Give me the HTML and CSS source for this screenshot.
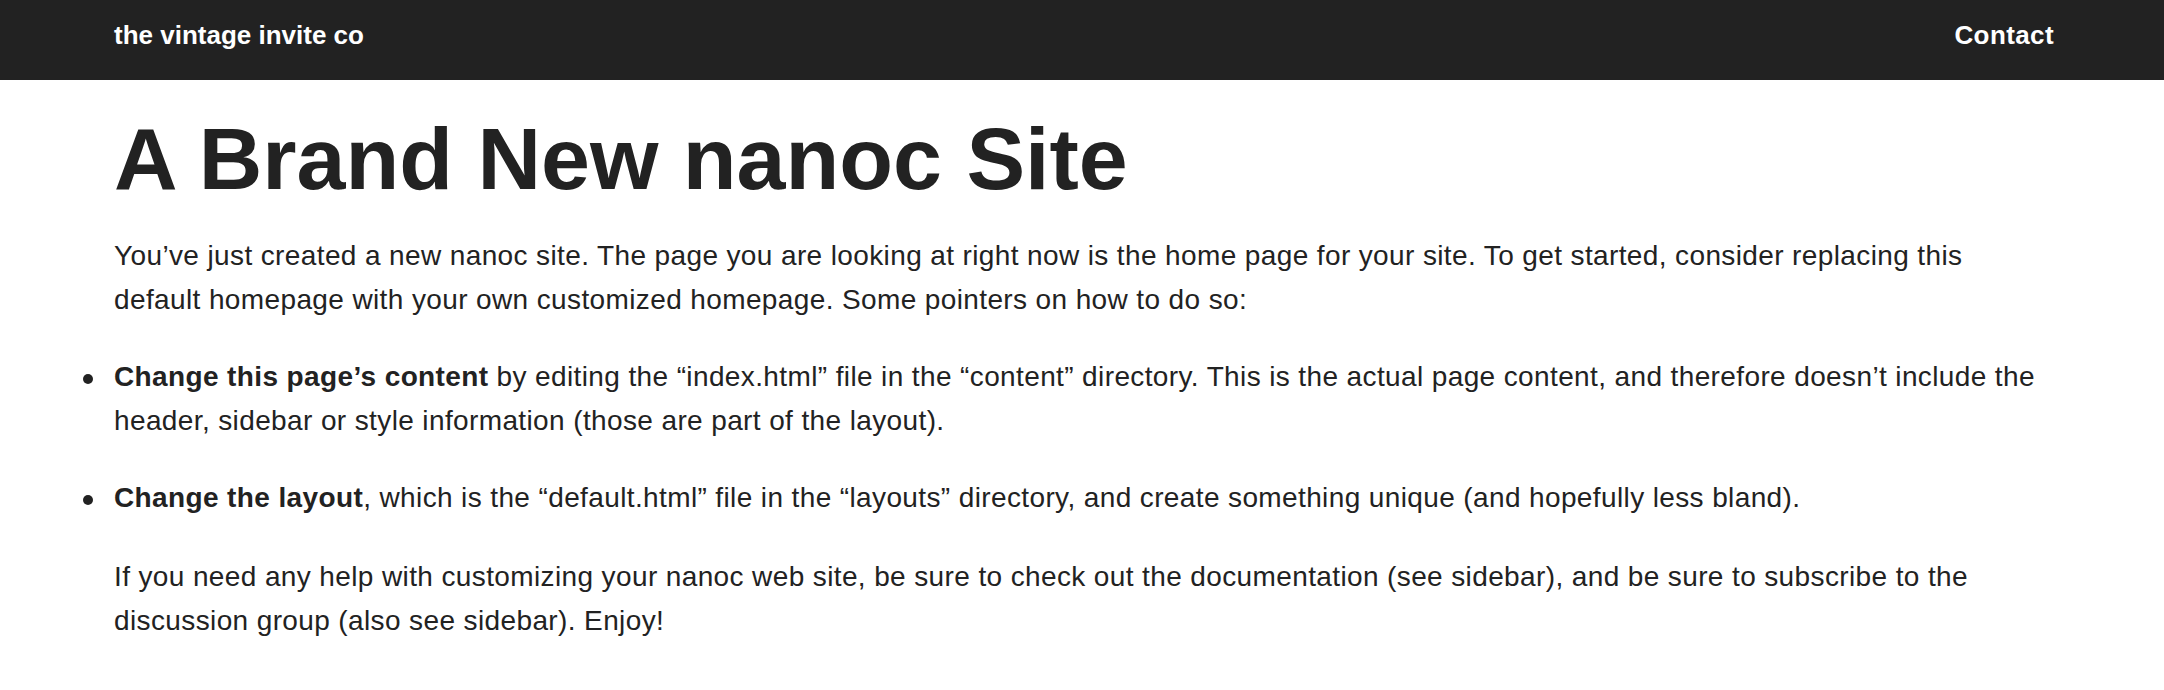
FILE: index.html
```html
<!DOCTYPE html>
<html lang="en">
<head>
<meta charset="utf-8">
<title>A Brand New nanoc Site</title>
<link rel="stylesheet" href="styles.css">
</head>
<body>
<header class="site-header">
  <a class="brand" href="#">the vintage invite co</a>
  <nav class="nav"><a class="nav-link" href="#">Contact</a></nav>
</header>
<main class="content">
  <h1 class="title">A Brand New nanoc Site</h1>
  <p class="para">You’ve just created a new nanoc site. The page you are looking at right now is the home page for your site. To get started, consider replacing this default homepage with your own customized homepage. Some pointers on how to do so:</p>
  <ul class="pointers">
    <li class="pointer"><strong>Change this page’s content</strong> by editing the “index.html” file in the “content” directory. This is the actual page content, and therefore doesn’t include the header, sidebar or style information (those are part of the layout).</li>
    <li class="pointer"><strong>Change the layout</strong>, which is the “default.html” file in the “layouts” directory, and create something unique (and hopefully less bland).</li>
  </ul>
  <p class="para">If you need any help with customizing your nanoc web site, be sure to check out the documentation (see sidebar), and be sure to subscribe to the discussion group (also see sidebar). Enjoy!</p>
</main>
</body>
</html>
```
FILE: styles.css
```css
html, body {
  margin: 0;
  padding: 0;
  background: #ffffff;
}

body {
  font-family: "Liberation Sans", Arial, Helvetica, sans-serif;
  color: #222222;
}

.site-header {
  background: #222222;
  height: 80px;
  box-sizing: border-box;
  padding: 20px 110px 0 114px;
  display: flex;
  justify-content: space-between;
  align-items: flex-start;
}

.brand,
.nav-link {
  color: #ffffff;
  text-decoration: none;
  font-weight: bold;
  font-size: 26px;
  line-height: 30px;
}

.nav-link {
  letter-spacing: 0.4px;
}

.content {
  padding: 0 114px;
}

.title {
  font-size: 88px;
  line-height: 100px;
  font-weight: bold;
  margin: 29px 0 25px;
  letter-spacing: 0;
}

.para,
.pointer {
  font-size: 28px;
  line-height: 44px;
  letter-spacing: 0.38px;
}

.para {
  margin: 0 0 33px;
}

.pointers {
  list-style: none;
  margin: 0;
  padding: 0;
}

.pointer {
  position: relative;
  margin: 0 0 33px;
}

.pointer:last-child {
  margin-bottom: 35px;
}

.pointer::before {
  content: "";
  position: absolute;
  left: -31px;
  top: 19px;
  width: 10px;
  height: 10px;
  border-radius: 50%;
  background: #222222;
}
```
